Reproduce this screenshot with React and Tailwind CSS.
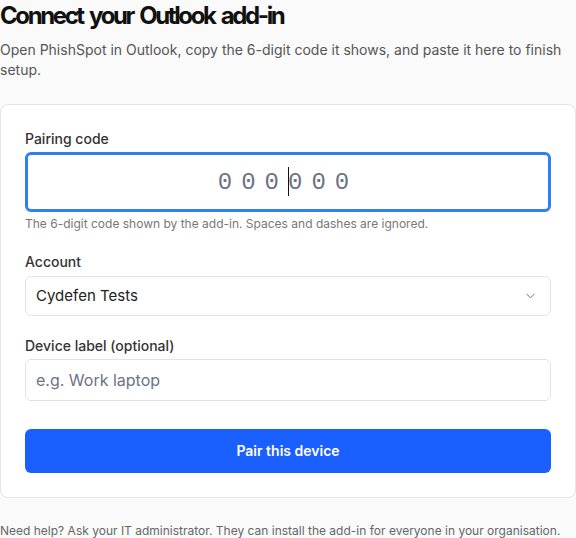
import React, { useState } from "react";
import { ChevronDown } from "lucide-react";

const App = () => {
  const [code, setCode] = useState("");
  const [label, setLabel] = useState("");

  return (
    <div className="min-h-screen bg-[#fafafa] font-['Inter','Liberation_Sans',sans-serif] text-[#111]">
      {/* HEADING */}
      <h1 className="text-2xl leading-8 font-bold tracking-[-0.1em] [word-spacing:3px] text-[#111]">
        Connect your Outlook add-in
      </h1>
      <p className="mt-2 text-sm leading-5 text-[#555]">
        Open PhishSpot in Outlook, copy the 6-digit code it shows, and paste it here to finish setup.
      </p>

      {/* CARD */}
      <div className="mt-6 bg-white border border-[#e5e5e5] rounded-lg p-6">
        <label className="block text-sm leading-5 font-medium text-[#333]">Pairing code</label>
        <div className="relative mt-[3px]">
          <input
            type="text"
            value={code}
            onChange={(e) => setCode(e.target.value)}
            placeholder="000000"
            className="w-full h-[60px] rounded-md border-[3px] border-[#2f80f7] bg-white text-center font-['Liberation_Mono',monospace] text-2xl tracking-[0.375em] text-[#333] placeholder:text-[#6b7385] outline-none"
          />
          {/* caret */}
          <span className="absolute left-1/2 top-[15px] h-[29px] w-px bg-[#111]"></span>
        </div>
        <p className="mt-1 text-xs leading-4 text-[#777]">
          The 6-digit code shown by the add-in. Spaces and dashes are ignored.
        </p>

        <label className="block mt-5 text-sm leading-5 font-medium text-[#333]">Account</label>
        <div className="relative mt-1">
          <select className="w-full h-10 appearance-none rounded-md border border-[#e2e2e2] bg-white px-2.5 text-[15px] text-[#222] outline-none">
            <option>Cydefen Tests</option>
          </select>
          <ChevronDown
            size={15}
            strokeWidth={1.6}
            className="pointer-events-none absolute right-[13px] top-1/2 -translate-y-1/2 text-[#6b7280]"
          />
        </div>

        <label className="block mt-5 text-sm leading-5 font-medium text-[#333]">Device label (optional)</label>
        <input
          type="text"
          value={label}
          onChange={(e) => setLabel(e.target.value)}
          placeholder="e.g. Work laptop"
          className="mt-[3px] w-full h-[42px] rounded-md border border-[#e2e2e2] bg-white px-2.5 text-base text-[#222] placeholder:text-[#6b7385] outline-none"
        />

        <button className="mt-7 w-full h-11 rounded-md bg-[#1a5fff] text-sm font-semibold text-white">
          Pair this device
        </button>
      </div>

      <p className="mt-[25px] text-xs leading-4 text-[#666]">
        Need help? Ask your IT administrator. They can install the add-in for everyone in your organisation.
      </p>
    </div>
  );
};

export default App;
